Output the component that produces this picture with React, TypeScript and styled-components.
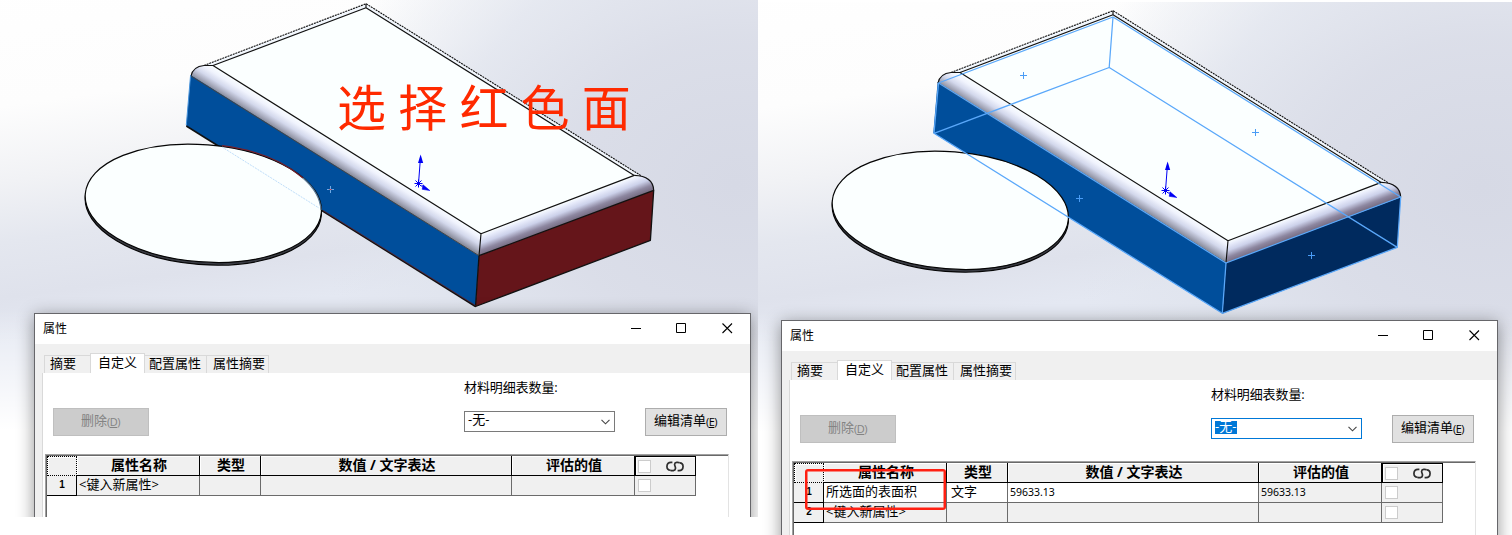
import React from "react";
import styled, { createGlobalStyle } from "styled-components";

const Global = createGlobalStyle`
  body {
    margin: 0;
    background: #fff;
    font-family: "Open Sans", "Noto Sans CJK SC", sans-serif;
    font-size: 13px;
    color: #000;
  }
  * { box-sizing: border-box; }
`;

const Page = styled.main`
  display: flex;
  align-items: flex-start;
  width: 1512px;
  height: 535px;
  overflow: hidden;
`;

const Scene = styled.section<{ $w: number; $h: number; $top: number; $shift: number }>`
  display: grid;
  flex: none;
  width: ${(p) => p.$w}px;
  height: ${(p) => p.$h}px;
  margin-top: ${(p) => p.$top}px;
  overflow: hidden;
  background:
    linear-gradient(to bottom, rgba(255, 255, 255, 0) 310px, #fff 430px),
    radial-gradient(ellipse 420px 370px at ${(p) => 735 - p.$shift}px 185px,
      #d6d9e5 0%, rgba(218, 221, 232, 0.95) 40%, rgba(223, 227, 237, 0.8) 68%, rgba(224, 228, 237, 0.4) 86%, rgba(225, 229, 238, 0) 100%),
    linear-gradient(172deg, #fff 0, #fdfdfd 150px, #f1f2f5 225px, #e4e7ef 285px, #dfe2ec 340px, #e4e8f2 385px);
  background-position: 0 0, 0 0, 0 -45px;
  background-size: 100% 100%, 100% 100%, 100% 600px;
  background-repeat: no-repeat;
`;

const Drawing = styled.svg`
  grid-area: 1 / 1;
  display: block;
`;

const RedNote = styled.text`
  font-family: KaiTi, "Noto Sans CJK SC", sans-serif;
  font-weight: 400;
  font-size: 49px;
  letter-spacing: 12.2px;
  fill: #ff2a00;
`;

const Dialog = styled.div<{ $x: number; $y: number }>`
  grid-area: 1 / 1;
  position: relative;
  display: flex;
  flex-direction: column;
  width: 717px;
  height: 320px;
  margin: ${(p) => p.$y}px 0 0 ${(p) => p.$x}px;
  border: 1px solid #66666a;
  background: #f0f0f0;
  box-shadow: 0 3px 16px rgba(0, 0, 0, 0.42);
`;

const TitleBar = styled.header`
  display: flex;
  flex: none;
  align-items: center;
  height: 30px;
  padding: 0 17px 2px 8px;
  background: #fff;
  font-size: 12px;
`;

const Title = styled.span`
  flex: 1;
`;

const WindowIcons = styled.svg`
  display: block;
`;

const Tabs = styled.nav`
  display: flex;
  flex: none;
  align-items: flex-end;
  height: 29px;
  padding-left: 9px;
`;

const Tab = styled.div<{ $w: number; $on?: boolean; $pad: number }>`
  width: ${(p) => p.$w}px;
  height: ${(p) => (p.$on ? 20 : 18)}px;
  padding-left: ${(p) => p.$pad}px;
  line-height: ${(p) => (p.$on ? 17 : 15)}px;
  background: ${(p) => (p.$on ? "#fff" : "#f0f0f0")};
  border: 1px solid #d9d9d9;
  border-bottom: 0;
  border-left-width: ${(p) => (p.$on || p.$w === 46 ? 1 : 0)}px;
  border-right-width: ${(p) => (p.$w === 46 ? 0 : 1)}px;
  white-space: nowrap;
`;

const Body = styled.div`
  flex: 1;
  margin-left: 7px;
  border-left: 1px solid #d9d9d9;
  background: #fff;
`;

const Controls = styled.div`
  display: flex;
  align-items: flex-end;
  height: 63px;
  padding-left: 10px;
`;

const Button = styled.button<{ $w: number; $off?: boolean }>`
  display: flex;
  align-items: center;
  justify-content: center;
  width: ${(p) => p.$w}px;
  height: 28px;
  padding: 0 1px 5px 0;
  border: 1px solid ${(p) => (p.$off ? "#bfbfbf" : "#adadad")};
  background: ${(p) => (p.$off ? "#ccc" : "#e1e1e1")};
  color: ${(p) => (p.$off ? "#838383" : "#000")};
  font: inherit;
  white-space: nowrap;
`;

const Key = styled.span`
  padding-top: 3px;
  font-size: 11px;
  letter-spacing: -0.5px;
`;

const Field = styled.div`
  display: flex;
  flex-direction: column;
  width: 151px;
  height: 63px;
  margin: 0 30px 0 315px;
`;

const Label = styled.span`
  height: 30px;
  margin-bottom: 8px;
  line-height: 29px;
  letter-spacing: -0.1px;
  white-space: nowrap;
`;

const Combo = styled.div<{ $focus?: boolean }>`
  display: flex;
  align-items: center;
  justify-content: space-between;
  height: 21px;
  padding: 0 4px 0 3px;
  border: 1px solid ${(p) => (p.$focus ? "#0078d7" : "#7a7a7a")};
`;

const ComboValue = styled.span<{ $focus?: boolean }>`
  height: 13px;
  margin-bottom: 2px;
  padding: 0 1px 0 0;
  line-height: 11px;
  background: ${(p) => (p.$focus ? "#0078d7" : "transparent")};
  color: ${(p) => (p.$focus ? "#fff" : "#000")};
`;

const SheetFrame = styled.div`
  width: 684px;
  height: 200px;
  margin: 18px 0 0 2px;
  border: 1px solid #a0a0a0;
  border-right-color: #e3e3e3;
`;

const Sheet = styled.div`
  display: grid;
  grid-template-columns: 30px 123px 61px 251px 123px 61px;
  grid-auto-rows: 20px;
  align-content: start;
  height: 100%;
  border: solid #696969;
  border-width: 1px 0 0 1px;
`;

const HeadCell = styled.div`
  display: flex;
  align-items: center;
  justify-content: center;
  padding: 0 0 2px 2px;
  border: solid #000;
  border-width: 0 1px 1px 0;
  box-shadow: inset 1px 1px #fff;
  background: #f0f0f0;
  font-size: 14px;
  font-weight: 700;
  line-height: 17px;
  white-space: pre;
`;

const CornerCell = styled(HeadCell)`
  border: 1px dotted #000;
`;

const LinkHead = styled(HeadCell)`
  justify-content: space-between;
  border-width: 1px;
  padding: 0 11px 0 2px;
`;

const Cell = styled.div<{ $white?: boolean; $small?: boolean; $pad?: number }>`
  display: flex;
  align-items: center;
  padding-left: ${(p) => p.$pad ?? 3}px;
  padding-bottom: ${(p) => (p.$small ? 1 : 2)}px;
  border: solid #6b6b6b;
  border-width: 0 1px 1px 0;
  background: ${(p) => (p.$white ? "#fff" : "#f0f0f0")};
  font-size: ${(p) => (p.$small ? 10.5 : 13)}px;
  font-family: ${(p) => (p.$small ? '"Noto Sans"' : '"Open Sans"')}, "Noto Sans CJK SC", sans-serif;
  line-height: 17px;
  white-space: nowrap;
`;

const CheckCell = styled(Cell)`
  padding-bottom: 0;
`;

const RowNumber = styled(Cell)`
  justify-content: center;
  padding: 0 0 3px 1px;
  border-color: #000;
  font-family: "Liberation Sans", sans-serif;
  font-size: 10px;
  font-weight: 700;
`;

const Check = styled.span`
  width: 13px;
  height: 13px;
  border: 1px solid #ccc;
  background: #fff;
`;

const Highlight = styled.div`
  position: absolute;
  left: 23px;
  top: 148px;
  width: 141px;
  height: 41px;
  border: 2.5px solid #ff2012;
  border-radius: 3px;
  box-shadow: inset 0 0 0 0.5px #ff2012;
`;

function Plus({ x, y, color = "#4a9cf5" }: { x: number; y: number; color?: string }) {
  return <path d={`M${x - 3.5} ${y}h7M${x} ${y - 3.5}v7`} stroke={color} strokeWidth="1" />;
}

function Model({ id, selected }: { id: string; selected?: boolean }) {
  const sel = "#5aa8fa";
  return (
    <g fill="none" strokeLinejoin="round">
      <defs>
        <linearGradient id={`${id}-l`} gradientUnits="userSpaceOnUse" x1="213" y1="65" x2="202.2" y2="82.4">
          <stop offset="0" stopColor="#fbffff" />
          <stop offset="0.3" stopColor="#f0f3fd" />
          <stop offset="0.6" stopColor="#d3d8ec" />
          <stop offset="0.85" stopColor="#a8abbd" />
          <stop offset="1" stopColor="#8c8f9e" />
        </linearGradient>
        <linearGradient id={`${id}-r`} gradientUnits="userSpaceOnUse" x1="481" y1="233.7" x2="488.3" y2="252.9">
          <stop offset="0" stopColor="#fbffff" />
          <stop offset="0.2" stopColor="#e6eafa" />
          <stop offset="0.45" stopColor="#ccd1ea" />
          <stop offset="0.75" stopColor="#8d87a0" />
          <stop offset="1" stopColor="#746a80" />
        </linearGradient>
      </defs>
      <path d="M204 65.5L366 3.7L641.5 176L634 175.5L366 8L213 65.3Z" fill="#f2f7fd" />
      <path d="M366 7.8L213 65.5L481 233.7L634.3 175.4Z" fill="#fbffff" />
      <path d="M191 76Q193 66 204 65.3H213L481 233.7L479 255.7Z" fill={`url(#${id}-l)`} />
      <path d="M481 233.7L634.3 175.4Q653 175 653.7 190.3L479 255.7Z" fill={`url(#${id}-r)`} />
      <path d="M190.6 75L479 255.7L475.5 306.5L186.3 126Z" fill="#004e9b" />
      <path d="M479 255.7L653.7 190.3L650.4 240.4L475.5 306.5Z" fill={selected ? "#002a5e" : "#65151a"} />
      <g stroke="#111" strokeWidth="1.15">
        <path d="M204 65.5L366 3.7L641.5 176" strokeDasharray="2 0.8" strokeWidth="1.1" />
        <path d="M366 3.7V7.8L213 65.5L481 233.7L634.3 175.4L366 7.8M481 233.7L479 255.7" />
        <path d="M213 65.5H204Q193 66.5 191 76M634.3 175.4Q653 176 653.7 190.3" />
        <path d="M191 76L479 255.7" stroke="#444" strokeWidth="1" />
        {!selected && (
          <>
            <path d="M479 255.7L653.7 190.3L650.4 240.4L475.5 306.5L479 255.7" strokeWidth="1.3" />
            <path d="M186.3 126L475.5 306.5" strokeWidth="1.5" />
            <path d="M323 210.5L475.5 305.5" stroke="#6a222c" strokeWidth="0.7" />
            <path d="M190.6 75L186.3 125" stroke="#4793dc" strokeWidth="1" />
          </>
        )}
      </g>
      <g transform="rotate(4.5 203.3 203.3)">
        <ellipse cx="203.5" cy="206" rx="118.4" ry="58.6" fill="#3b3d45" stroke="#050505" strokeWidth="1.2" />
        <ellipse cx="203.3" cy="203.3" rx="118.4" ry="58.6" fill="#fbffff" stroke="#050505" strokeWidth="1.2" />
      </g>
      {!selected && (
        <>
          <path d="M222 145.7Q273 152 303 178" stroke="#74202c" strokeWidth="1.2" />
          <path d="M303 178Q320 193 321 210" stroke="#5d7d9b" strokeWidth="1.2" />
          <path d="M222 147L319 208" stroke="#bfdefa" strokeWidth="1" strokeDasharray="2 1" />
          <Plus x={330.5} y={189.5} color="#6fa9e4" />
          <path d="M329.5 189.5h2" stroke="#c0394a" />
        </>
      )}
      {selected && (
        <>
          <g stroke={sel} strokeWidth="1.25">
            <path d="M191.5 76L366 10L653.7 190L479 256Z" />
            <path d="M187 126.3L362.2 60.5L650.3 240.4L475.3 306.3Z" />
            <path d="M191.5 76L187 126.3M366 10L362.2 60.5M653.7 190L650.3 240.4M479 256L475.3 306.3" />
          </g>
          <Plus x={276.5} y={68.5} />
          <Plus x={508.5} y={125.5} />
          <Plus x={332.5} y={191.5} />
          <Plus x={564.5} y={248.5} />
        </>
      )}
      <g stroke="#0000f5" strokeWidth="1">
        <path d="M418.5 183.5L420.3 160" />
        <path d="M414.5 183.5h8M418.5 179.5v8M415.5 180.5l6 6M421.5 180.5l-6 6" />
        <path d="M420.6 154.5L423.2 163H418Z" fill="#0000f5" strokeWidth="0" />
        <path d="M421 185L425 187.5M423 184.8L429.8 190.5L422.2 189.3Z" fill="#0000f5" strokeWidth="0.6" />
      </g>
    </g>
  );
}

function LinkIcon() {
  return (
    <svg width="18" height="11" viewBox="0 0 18 11" fill="none" stroke="#2e2e2e" strokeWidth="1.7">
      <path d="M6.4 1.3H5C-.3 1.3-.3 9 4.4 9.2" />
      <path d="M13.6 1.8C12.4 1.1 8.8.9 8.6 3.2C8.5 4.8 9.6 5.8 9.5 7.4C9.4 10.1 5.6 9.9 4.4 9.2" />
      <path d="M11.6 9.7H13C18.3 9.7 18.3 2 13.6 1.8" />
    </svg>
  );
}

type Row = { name: string; type?: string; value?: string };

function PropertiesDialog({ x, y, rows, focus }: { x: number; y: number; rows: Row[]; focus?: boolean }) {
  return (
    <Dialog $x={x} $y={y}>
      <TitleBar>
        <Title>属性</Title>
        <WindowIcons width="102" height="11" viewBox="0 0 102 11" fill="none" stroke="#000">
          <path d="M0 5.5h10M45.5 .5h9v9h-9z" />
          <path d="M91.5 .5l9.5 9.5M101 .5l-9.5 9.5" strokeWidth="1.1" />
        </WindowIcons>
      </TitleBar>
      <Tabs>
        <Tab $w={46} $pad={5}>摘要</Tab>
        <Tab $w={55} $pad={7} $on>自定义</Tab>
        <Tab $w={62} $pad={4}>配置属性</Tab>
        <Tab $w={62} $pad={6}>属性摘要</Tab>
      </Tabs>
      <Body>
        <Controls>
          <Button $w={96} $off>删除<Key>(<u>D</u>)</Key></Button>
          <Field>
            <Label>材料明细表数量:</Label>
            <Combo $focus={focus}>
              <ComboValue $focus={focus}>-无-</ComboValue>
              <svg width="9" height="6" viewBox="0 0 9 6" fill="none" stroke="#444" strokeWidth="1.1">
                <path d="M.5 .8L4.5 4.8L8.5 .8" />
              </svg>
            </Combo>
          </Field>
          <Button $w={82}>编辑清单<Key>(<u>E</u>)</Key></Button>
        </Controls>
        <SheetFrame>
          <Sheet>
            <CornerCell />
            <HeadCell>属性名称</HeadCell>
            <HeadCell>类型</HeadCell>
            <HeadCell>数值 / 文字表达</HeadCell>
            <HeadCell>评估的值</HeadCell>
            <LinkHead><Check /><LinkIcon /></LinkHead>
            {rows.map((r, i) => (
              <React.Fragment key={r.name}>
                <RowNumber>{i + 1}</RowNumber>
                <Cell $white={!!r.value} $pad={2}>{r.name}</Cell>
                <Cell $white={!!r.value} $pad={4}>{r.type}</Cell>
                <Cell $white={!!r.value} $small $pad={2}>{r.value}</Cell>
                <Cell $small $pad={2}>{r.value}</Cell>
                <CheckCell><Check /></CheckCell>
              </React.Fragment>
            ))}
          </Sheet>
        </SheetFrame>
      </Body>
      {focus && <Highlight />}
    </Dialog>
  );
}

export default function App() {
  return (
    <>
      <Global />
      <Page>
        <Scene $w={758} $h={517} $top={0} $shift={0}>
          <Drawing width="758" height="320" viewBox="0 0 758 320">
            <Model id="a" />
            <RedNote x="337" y="126">选择红色面</RedNote>
          </Drawing>
          <PropertiesDialog x={34} y={313} rows={[{ name: "<键入新属性>" }]} />
        </Scene>
        <Scene $w={754} $h={533} $top={2} $shift={11}>
          <Drawing width="754" height="320" viewBox="11 -5 754 320">
            <Model id="b" selected />
          </Drawing>
          <PropertiesDialog
            x={23}
            y={318}
            focus
            rows={[{ name: "所选面的表面积", type: "文字", value: "59633.13" }, { name: "<键入新属性>" }]}
          />
        </Scene>
      </Page>
    </>
  );
}
